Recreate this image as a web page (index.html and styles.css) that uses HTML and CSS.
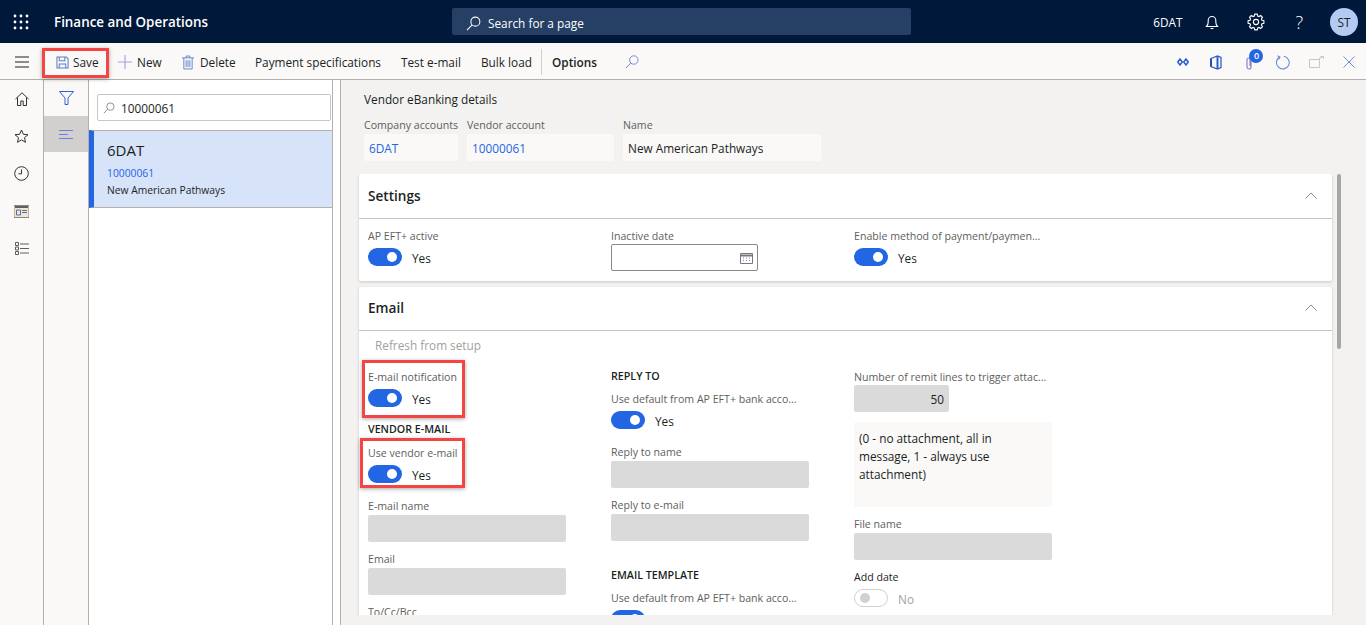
FILE: index.html
```html
<!DOCTYPE html>
<html lang="en">
<head>
    <meta charset="UTF-8">
    <meta name="viewport" content="width=device-width, initial-scale=1.0">
    <title>Vendor eBanking details</title>
    <link rel="stylesheet" href="styles.css">
</head>
<body>
    <header class="topbar">
        <svg class="waffle" width="16" height="16" viewBox="0 0 16 16" fill="#fff"><circle cx="2" cy="2" r="1.4"/><circle cx="8" cy="2" r="1.4"/><circle cx="14" cy="2" r="1.4"/><circle cx="2" cy="8" r="1.4"/><circle cx="8" cy="8" r="1.4"/><circle cx="14" cy="8" r="1.4"/><circle cx="2" cy="14" r="1.4"/><circle cx="8" cy="14" r="1.4"/><circle cx="14" cy="14" r="1.4"/></svg>
        <div class="app-title">Finance and Operations</div>
        <div class="page-search">
            <svg width="15" height="15" viewBox="0 0 16 16" fill="none" stroke="#fff" stroke-width="1.1"><circle cx="10" cy="6" r="4.8"/><path d="M6.6 9.4 1 15"/></svg>
            <span>Search for a page</span>
        </div>
        <div class="top-right">
            <span class="company">6DAT</span>
            <svg class="icon-bell" width="16" height="16" viewBox="0 0 16 16" fill="none" stroke="#fff" stroke-width="1.1"><path d="M2.5 12.5h11c-1.2-1.2-1.7-2.400-1.7-4.500V6.300a3.800 3.800 0 0 0-7.600 0V8c0 2.100-.5 3.300-1.700 4.500Z"/><path d="M6.500 14.500h3"/></svg>
            <svg class="icon-gear" width="18" height="18" viewBox="0 0 18 18" fill="none" stroke="#fff" stroke-width="1.1"><circle cx="9" cy="9" r="2.600"/><path transform="translate(9 9)" d="M5.960-1.710 7.900-1.250V1.250L5.960 1.710 5.420 3 6.470 4.700 4.700 6.470 3 5.420 1.710 5.960 1.250 7.900H-1.250L-1.710 5.960-3 5.420-4.700 6.470-6.470 4.700-5.420 3-5.960 1.710-7.900 1.250V-1.250L-5.960-1.710-5.420-3-6.470-4.700-4.700-6.470-3-5.420-1.710-5.960-1.250-7.900H1.250L1.710-5.960 3-5.420 4.700-6.470 6.470-4.700 5.420-3Z"/></svg>
            <span class="help">?</span>
            <span class="avatar">ST</span>
        </div>
    </header>

    <div class="toolbar">
        <button class="hamburger" aria-label="Menu">
            <svg width="16" height="12" viewBox="0 0 16 12" stroke="#201f1e" stroke-width="1.200"><path d="M1 1h14M1 6h14M1 11h14"/></svg>
        </button>
        <div class="actions">
            <button class="action action-save">
                <svg width="13" height="13" viewBox="0 0 14 14" fill="none" stroke="#5a7fc4" stroke-width="1.100"><path d="M1 1h10l2 2v10H1Z"/><path d="M3.500 1v4h6V1M3.500 13V8.500h7V13"/></svg>
                Save
            </button>
            <button class="action action-new">
                <svg width="14" height="14" viewBox="0 0 16 16" stroke="#a99ee0" stroke-width="1.300"><path d="M8 0v16M0 8h16"/></svg>
                New
            </button>
            <button class="action action-delete">
                <svg width="12" height="15" viewBox="0 0 13 16" fill="none" stroke="#5f7fc9" stroke-width="1"><path d="M0 3h13M4.500 3V1h4v2M2 3v12h9V3M4.500 5.500V13M6.500 5.500V13M8.500 5.500V13"/></svg>
                Delete
            </button>
            <button class="action action-pay">Payment specifications</button>
            <button class="action action-test">Test e-mail</button>
            <button class="action action-bulk">Bulk load</button>
            <span class="toolbar-sep"></span>
            <button class="action action-options">Options</button>
            <svg class="action-search" width="14" height="14" viewBox="0 0 14 14" fill="none" stroke="#7d86e0" stroke-width="1"><circle cx="8.800" cy="5" r="4.200"/><path d="M5.800 8 1 13"/></svg>
        </div>
        <div class="tools">
            <svg width="12" height="8" viewBox="0 0 12 8" fill="none" stroke="#2f62c9" stroke-width="1.500"><path d="M3 1 5.300 4 3 7 .8 4ZM9 1l2.200 3L9 7 6.700 4Z"/></svg>
            <svg width="12" height="15" viewBox="0 0 12 15" fill="none"><path d="M1 3.500 7.500 1 11 2.500v10L7.500 14 1 11.500Z" stroke="#2b5fc9" stroke-width="1.300"/><path d="M1 3.500v8" stroke="#1f4fb0" stroke-width="2"/><path d="M7.500 1v13" stroke="#2b5fc9" stroke-width="2"/></svg>
            <span class="attach">
                <svg width="6" height="13" viewBox="0 0 6 13" fill="none" stroke="#8f82c9" stroke-width="1.200"><path d="M5 4v6a2 2 0 0 1-4 0V2.500a1.500 1.500 0 0 1 3 0V9"/></svg>
                <span class="badge">0</span>
            </span>
            <svg width="15" height="15" viewBox="0 0 16 16" fill="none" stroke="#5f85e0" stroke-width="1.100"><path d="M5 2.200A6.800 6.800 0 1 0 9.500 1.400"/><path d="M2.800 .8 5.300 2.300 3.700 4.700"/></svg>
            <svg width="15" height="12" viewBox="0 0 15 12" fill="none" stroke="#c8c6c4" stroke-width="1"><path d="M.5 3.500h10v8H.5ZM9.500 3 14 .8M11.500.5H14.500V3"/></svg>
            <svg width="12" height="12" viewBox="0 0 12 12" stroke="#6d8fe6" stroke-width="1"><path d="M.5.5l11 11M11.500.5l-11 11"/></svg>
        </div>
    </div>

    <div class="workspace">
        <nav class="sidenav">
            <svg width="14" height="14" viewBox="0 0 14 14" fill="none" stroke="#323130" stroke-width="1"><path d="M.5 7 7 .8 13.500 7M2.500 5.500v8h3.300V9h2.400v4.500h3.300v-8"/></svg>
            <svg width="15" height="15" viewBox="0 0 15 15" fill="none" stroke="#323130" stroke-width="1"><path d="M7.500 1l1.900 4.300 4.600.4-3.500 3 1 4.600-4-2.400-4 2.400 1-4.600-3.500-3 4.600-.4Z"/></svg>
            <svg width="15" height="15" viewBox="0 0 15 15" fill="none" stroke="#323130" stroke-width="1"><circle cx="7.500" cy="7.500" r="6.800"/><path d="M7.500 3.500v4.300h-3"/></svg>
            <svg width="15" height="13" viewBox="0 0 15 13" fill="none"><path d="M0 .5h15v12H0Z" fill="#f4e4c8" stroke="#8a8886"/><path d="M1 1h13v2H1Z" fill="#5f5e5c"/><path d="M2.500 5h4v5h-4ZM8 5.500h5M8 7.500h5" stroke="#4a6fb5"/></svg>
            <svg width="14" height="13" viewBox="0 0 14 13" fill="none" stroke="#5f5e5c" stroke-width="1"><path d="M.5.500h3v3h-3ZM.5 5h3v3h-3ZM.5 9.500h3v3h-3ZM5 2h9M5 6.500h9M5 11h9"/></svg>
        </nav>
        <aside class="filterpane">
            <div class="pane-btn">
                <svg width="15" height="14" viewBox="0 0 15 14" fill="none" stroke="#2f62d9" stroke-width="1"><path d="M.5.500h14L9 7v6.500H6V7Z"/></svg>
            </div>
            <div class="pane-btn pane-btn-on">
                <svg width="14" height="9" viewBox="0 0 14 9" stroke="#6d7fd6" stroke-width="1"><path d="M0 .5h14M0 4.500h9M0 8.500h14"/></svg>
            </div>
        </aside>
        <section class="listpane">
            <div class="list-inner">
                <div class="quickfilter">
                    <svg width="12" height="12" viewBox="0 0 13 13" fill="none" stroke="#8a8886" stroke-width="1"><circle cx="8" cy="5" r="4"/><path d="M5 8 .8 12.200"/></svg>
                    <span>10000061</span>
                </div>
                <div class="list-item">
                    <div class="item-title">6DAT</div>
                    <div class="item-link">10000061</div>
                    <div class="item-name">New American Pathways</div>
                </div>
            </div>
        </section>
        <main class="details">
            <div class="details-head">
                <div class="details-title">Vendor eBanking details</div>
                <div class="head-fields">
                    <div class="head-field hf-company">
                        <label>Company accounts</label>
                        <div class="readonly link">6DAT</div>
                    </div>
                    <div class="head-field hf-vendor">
                        <label>Vendor account</label>
                        <div class="readonly link">10000061</div>
                    </div>
                    <div class="head-field hf-name">
                        <label>Name</label>
                        <div class="readonly">New American Pathways</div>
                    </div>
                </div>
            </div>
            <div class="details-scroll">
                <div class="cards">
                    <section class="card card-settings">
                        <div class="card-head">
                            <h2>Settings</h2>
                            <svg width="12" height="7" viewBox="0 0 12 7" fill="none" stroke="#8a8886"><path d="M.5 6.500 6 1l5.500 5.500"/></svg>
                        </div>
                        <div class="form-grid settings-grid">
                            <div class="field">
                                <label>AP EFT+ active</label>
                                <div class="switch-row"><span class="toggle"></span><span class="switch-text">Yes</span></div>
                            </div>
                            <div class="field">
                                <label>Inactive date</label>
                                <div class="date-input">
                                    <svg width="13" height="12" viewBox="0 0 13 12" fill="none" stroke="#7a7876"><path d="M.5 1.500h12v10H.5Z"/><path d="M.5 3.500h12" stroke-width="2"/><path d="M3 6h1M6 6h1M9 6h1M3 8.500h1M6 8.500h1M9 8.500h1" stroke="#6d8fc9"/></svg>
                                </div>
                            </div>
                            <div class="field">
                                <label>Enable method of payment/paymen...</label>
                                <div class="switch-row"><span class="toggle"></span><span class="switch-text">Yes</span></div>
                            </div>
                        </div>
                    </section>
                    <section class="card card-email">
                        <div class="card-head">
                            <h2>Email</h2>
                            <svg width="12" height="7" viewBox="0 0 12 7" fill="none" stroke="#8a8886"><path d="M.5 6.500 6 1l5.500 5.500"/></svg>
                        </div>
                        <div class="refresh">Refresh from setup</div>
                        <div class="form-grid">
                            <div class="col col-one">
                                <div class="field">
                                    <label>E-mail notification</label>
                                    <div class="switch-row"><span class="toggle"></span><span class="switch-text">Yes</span></div>
                                </div>
                                <h3 class="group-vendor">VENDOR E-MAIL</h3>
                                <div class="field f-use-vendor">
                                    <label>Use vendor e-mail</label>
                                    <div class="switch-row"><span class="toggle"></span><span class="switch-text">Yes</span></div>
                                </div>
                                <div class="field f-mail-name">
                                    <label>E-mail name</label>
                                    <div class="input-off"></div>
                                </div>
                                <div class="field f-gap">
                                    <label>Email</label>
                                    <div class="input-off"></div>
                                </div>
                                <div class="field f-gap">
                                    <label>To/Cc/Bcc</label>
                                    <div class="input-off"></div>
                                </div>
                            </div>
                            <div class="col col-two">
                                <h3>REPLY TO</h3>
                                <div class="field f-under-head">
                                    <label>Use default from AP EFT+ bank acco...</label>
                                    <div class="switch-row"><span class="toggle"></span><span class="switch-text">Yes</span></div>
                                </div>
                                <div class="field f-reply-name">
                                    <label>Reply to name</label>
                                    <div class="input-off"></div>
                                </div>
                                <div class="field f-gap">
                                    <label>Reply to e-mail</label>
                                    <div class="input-off"></div>
                                </div>
                                <h3 class="group-template">EMAIL TEMPLATE</h3>
                                <div class="field f-under-head">
                                    <label>Use default from AP EFT+ bank acco...</label>
                                    <div class="switch-row"><span class="toggle"></span><span class="switch-text">Yes</span></div>
                                </div>
                            </div>
                            <div class="col col-three">
                                <div class="field">
                                    <label>Number of remit lines to trigger attac...</label>
                                    <div class="input-off input-num">50</div>
                                </div>
                                <div class="note">(0 - no attachment, all in message, 1 - always use attachment)</div>
                                <div class="field f-file">
                                    <label>File name</label>
                                    <div class="input-off"></div>
                                </div>
                                <div class="field f-gap">
                                    <label class="label-dark">Add date</label>
                                    <div class="switch-row switch-off"><span class="toggle"></span><span class="switch-text">No</span></div>
                                </div>
                            </div>
                        </div>
                    </section>
                </div>
                <div class="scrollbar"><span class="thumb"></span></div>
            </div>
        </main>
    </div>

    <!-- red callouts drawn over the screenshot -->
    <div class="callout callout-save"></div>
    <div class="callout callout-notify"></div>
    <div class="callout callout-vendor"></div>
</body>
</html>
```

FILE: styles.css
```css
* {
    margin: 0;
    padding: 0;
    box-sizing: border-box;
}

html, body {
    height: 100%;
    overflow: hidden;
}

body {
    display: flex;
    flex-direction: column;
    font-family: "Open Sans", "Noto Sans", sans-serif;
    font-size: 11.8px;
    color: #201f1e;
    background-color: #f3f2f1;
}

button {
    font: inherit;
    color: inherit;
    background: none;
    border: none;
}

/* top bar */
.topbar {
    height: 43px;
    flex: none;
    display: flex;
    align-items: center;
    background-color: #00183a;
    color: #fff;
}

.waffle {
    margin-left: 13px;
}

.app-title {
    margin-left: 25px;
    width: 398px;
    font-size: 13.4px;
    font-weight: 600;
}

.page-search {
    width: 459px;
    height: 27px;
    display: flex;
    align-items: center;
    gap: 7px;
    padding: 3px 0 0 14px;
    background-color: #253f65;
    border-radius: 2px;
}

.top-right {
    margin-left: auto;
    display: flex;
    align-items: center;
    padding-right: 8px;
}

.company {
    margin-right: 22px;
}

.icon-bell {
    margin-right: 27px;
}

.icon-gear {
    margin-right: 30px;
}

.help {
    font-size: 18px;
    font-weight: 300;
    margin-right: 27px;
}

.avatar {
    width: 28px;
    height: 28px;
    border-radius: 50%;
    background-color: #b5caf3;
    color: #201f1e;
    display: flex;
    align-items: center;
    justify-content: center;
}

/* action pane */
.toolbar {
    height: 37px;
    flex: none;
    display: flex;
    align-items: center;
    padding-top: 2px;
    background-color: #faf9f8;
    border-bottom: 1px solid #b3b0ad;
}

.hamburger {
    width: 43px;
    display: flex;
    justify-content: center;
}

.actions {
    display: flex;
    align-items: center;
    height: 100%;
}

.action {
    display: flex;
    align-items: center;
    gap: 5px;
    white-space: nowrap;
}

.action-save {
    margin-left: 13px;
    width: 62px;
    gap: 4px;
}

.action-new {
    width: 64px;
}

.action-delete {
    width: 73px;
    gap: 6px;
}

.action-pay {
    width: 146px;
}

.action-test {
    width: 80px;
}

.action-bulk {
    width: 60px;
}

.toolbar-sep {
    width: 1px;
    height: 26px;
    background-color: #d2d0ce;
    margin-right: 10px;
}

.action-options {
    width: 73px;
    font-weight: 600;
}

.tools {
    margin-left: auto;
    display: grid;
    grid-auto-flow: column;
    grid-auto-columns: 33.3px;
    justify-items: center;
    align-items: center;
}

.attach {
    position: relative;
    display: flex;
    padding-top: 3px;
}

.badge {
    position: absolute;
    left: 3px;
    top: -5px;
    width: 14px;
    height: 14px;
    border-radius: 50%;
    background-color: #2266e3;
    color: #fff;
    font-size: 9px;
    font-weight: 600;
    text-align: center;
    line-height: 14px;
}

/* main area */
.workspace {
    flex: 1;
    min-height: 0;
    display: flex;
}

.sidenav {
    width: 44px;
    flex: none;
    display: grid;
    grid-auto-rows: 37.5px;
    align-content: start;
    place-items: center;
    background-color: #faf9f8;
    border-right: 1px solid #b3b0ad;
}

.filterpane {
    width: 45px;
    flex: none;
    background-color: #faf9f8;
    border-right: 1px solid #b3b0ad;
}

.pane-btn {
    height: 36px;
    display: flex;
    align-items: center;
    justify-content: center;
}

.pane-btn-on {
    background-color: #d2d0ce;
}

.listpane {
    width: 252px;
    flex: none;
    background-color: #fff;
    border-right: 1px solid #b3b0ad;
}

.list-inner {
    width: 244px;
    height: 100%;
    border-right: 1px solid #b3b0ad;
    padding-top: 14px;
}

.quickfilter {
    margin-left: 8px;
    width: 234px;
    height: 27px;
    display: flex;
    align-items: center;
    gap: 6px;
    padding-left: 5px;
    border: 1px solid #c8c6c4;
    border-radius: 2px;
}

.quickfilter span {
    padding-top: 1px;
}

.list-item {
    margin-top: 9px;
    height: 78px;
    padding: 8px 0 0 13px;
    background-color: #d7e3f9;
    border: 1px solid #b3b0ad;
    border-left: 5px solid #2266e3;
    border-right: none;
}

.item-title {
    font-size: 15px;
    font-weight: 500;
    line-height: 22px;
}

.item-link {
    margin-top: 4px;
    color: #2266e3;
    font-size: 10.3px;
    line-height: 17px;
}

.item-name {
    font-size: 10.3px;
    line-height: 17px;
}

.details {
    flex: 1;
    min-width: 0;
    display: flex;
    flex-direction: column;
}

.details-head {
    height: 94px;
    flex: none;
    padding: 10px 0 0 23px;
}

.details-title {
    line-height: 18px;
}

.head-fields {
    display: flex;
    gap: 9px;
    margin-top: 9px;
}

label {
    display: block;
    height: 16px;
    line-height: 16px;
    font-size: 10.6px;
    color: #605e5c;
    white-space: nowrap;
}

.hf-company {
    width: 94px;
}

.hf-vendor {
    width: 147px;
}

.hf-name {
    width: 198px;
}

.readonly {
    margin-top: 1px;
    height: 27px;
    line-height: 27px;
    padding: 1px 0 0 5px;
    background-color: #faf9f8;
    border-radius: 2px;
}

.link {
    color: #2266e3;
}

.details-scroll {
    flex: none;
    height: 441px;
    display: flex;
    padding-left: 18px;
    overflow: hidden;
}

.cards {
    width: 973px;
    flex: none;
    display: flex;
    flex-direction: column;
    gap: 6px;
}

.card {
    flex: none;
    background-color: #fff;
    border-radius: 2px;
    box-shadow: 0 1px 3px rgba(0, 0, 0, 0.18);
}

.card-settings {
    height: 107px;
}

.card-head {
    height: 45px;
    display: flex;
    align-items: center;
    justify-content: space-between;
    padding: 0 15px 2px 9px;
    border-bottom: 1px solid #c8c6c4;
}

.card-email .card-head {
    height: 44px;
}

h2 {
    font-size: 13.6px;
    font-weight: 600;
}

.form-grid {
    display: grid;
    grid-template-columns: 243px 243px 243px;
    padding-left: 9px;
}

.settings-grid {
    padding-top: 9px;
}

.refresh {
    height: 30px;
    line-height: 28px;
    padding-left: 16px;
    color: #a19f9d;
}

.card-email .form-grid {
    padding-top: 8px;
}

h3 {
    height: 16px;
    line-height: 16px;
    font-size: 10.7px;
    font-weight: 600;
}

.switch-row {
    height: 18px;
    margin-top: 4px;
    display: flex;
    align-items: center;
    gap: 10px;
}

.switch-text {
    padding-top: 2px;
}

.toggle {
    position: relative;
    width: 34px;
    height: 18px;
    border-radius: 9px;
    background-color: #2266e3;
}

.toggle::after {
    content: "";
    position: absolute;
    right: 5px;
    top: 4px;
    width: 10px;
    height: 10px;
    border-radius: 50%;
    background-color: #fff;
}

.switch-off {
    color: #a19f9d;
}

.switch-off .toggle {
    background-color: #fff;
    border: 1px solid #d2d0ce;
}

.switch-off .toggle::after {
    right: auto;
    left: 5px;
    top: 3px;
    background-color: #d2d0ce;
}

.date-input {
    width: 147px;
    height: 27px;
    display: flex;
    align-items: center;
    justify-content: flex-end;
    padding-right: 4px;
    border: 1px solid #8a8886;
    border-radius: 2px;
}

.input-off {
    margin-top: 1px;
    width: 198px;
    height: 27px;
    background-color: #dadada;
    border-radius: 2px;
}

.input-num {
    margin-top: 0;
    width: 95px;
    line-height: 27px;
    text-align: right;
    padding: 1px 5px 0 0;
}

.note {
    margin-top: 10px;
    width: 198px;
    height: 85px;
    padding: 7px 20px 0 5px;
    line-height: 18px;
    background-color: #faf9f8;
    border-radius: 2px;
}

.label-dark {
    color: #201f1e;
}

.col {
    display: flex;
    flex-direction: column;
    align-items: flex-start;
}

.col-two {
    margin-top: -1px;
}

.group-vendor {
    margin-top: 14px;
}

.f-use-vendor {
    margin-top: 8px;
}

.f-mail-name {
    margin-top: 15px;
}

.f-gap {
    margin-top: 9px;
}

.f-under-head {
    margin-top: 7px;
}

.f-reply-name {
    margin-top: 15px;
}

.group-template {
    margin-top: 26px;
}

.f-file {
    margin-top: 9px;
}

.scrollbar {
    width: 9px;
    margin-left: 5px;
}

.thumb {
    display: block;
    width: 4px;
    height: 175px;
    border-radius: 2px;
    background-color: #a6a6a6;
}

/* red annotation boxes, they sit over the app */
.callout {
    position: absolute;
    border: 3px solid #f44545;
    box-shadow: 0 1px 4px rgba(0, 0, 0, 0.35);
}

.callout-save {
    left: 42px;
    top: 48px;
    width: 67px;
    height: 30px;
}

.callout-notify {
    left: 362px;
    top: 360px;
    width: 103px;
    height: 58px;
}

.callout-vendor {
    left: 360px;
    top: 438px;
    width: 105px;
    height: 50px;
}
```
